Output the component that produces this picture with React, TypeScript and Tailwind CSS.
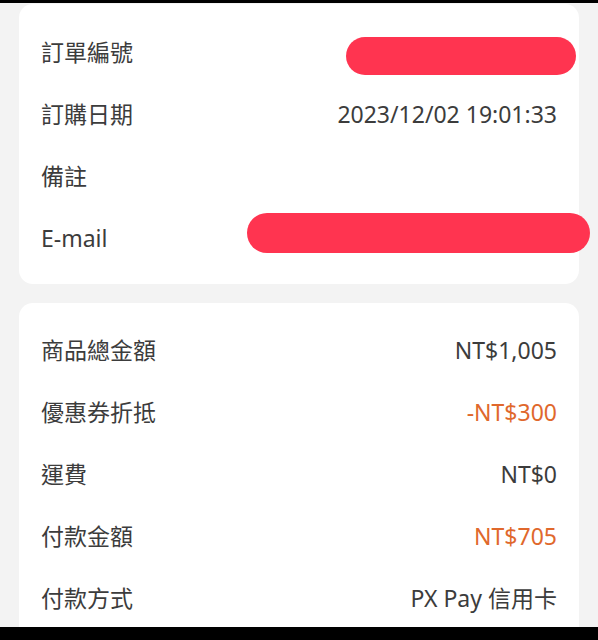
import React from 'react';

type Row = { label: string; value?: string; accent?: boolean };

const orderRows: Row[] = [
  { label: '訂單編號' },
  { label: '訂購日期', value: '2023/12/02 19:01:33' },
  { label: '備註' },
  { label: 'E-mail' },
];

const payRows: Row[] = [
  { label: '商品總金額', value: 'NT$1,005' },
  { label: '優惠券折抵', value: '-NT$300', accent: true },
  { label: '運費', value: 'NT$0' },
  { label: '付款金額', value: 'NT$705', accent: true },
  { label: '付款方式', value: 'PX Pay 信用卡' },
];

const InfoRow = ({ label, value, accent }: Row) => (
  <div className="flex h-[62px] items-center justify-between">
    <span>{label}</span>
    {value && <span className={accent ? 'text-[#e0682c]' : ''}>{value}</span>}
  </div>
);

const App = () => {
  return (
    <div
      className="h-[640px] w-full overflow-hidden bg-black pt-[3px] pb-[13px] text-[23px] text-[#3c3c3c]"
      style={{ fontFamily: '"Noto Sans", "Noto Sans CJK TC", sans-serif' }}
    >
      <div className="h-full overflow-hidden bg-[#f3f3f3] px-[19px] pt-px">
        <div className="relative rounded-[14px] bg-white px-[22px] pt-[17px] pb-[15px]">
          {orderRows.map((r) => (
            <InfoRow key={r.label} {...r} />
          ))}
          <div className="absolute top-[33px] left-[327px] h-[38px] w-[230px] rounded-full bg-[#ff3450]" />
          <div className="absolute top-[209px] left-[228px] h-[40px] w-[343px] rounded-full bg-[#ff3450]" />
        </div>
        <div className="mt-[19px] rounded-[14px] bg-white px-[22px] pt-[16px] pb-[15px]">
          {payRows.map((r) => (
            <InfoRow key={r.label} {...r} />
          ))}
        </div>
      </div>
    </div>
  );
};

export default App;
